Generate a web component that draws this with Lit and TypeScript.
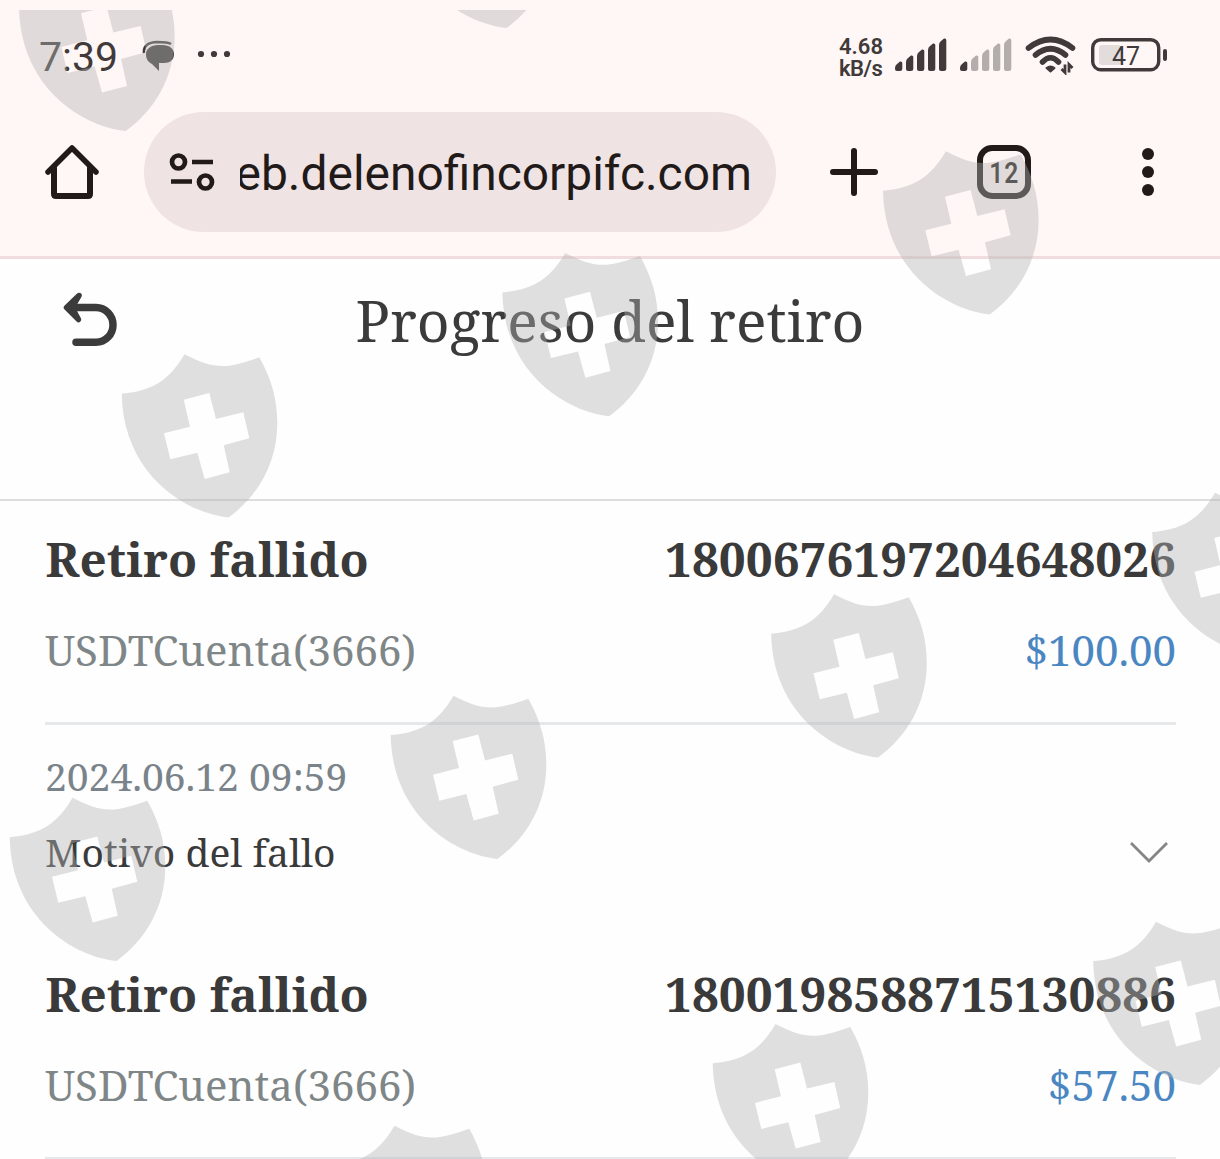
import { LitElement, html, css, svg } from 'lit';
import { customElement, property } from 'lit/decorators.js';

interface Withdrawal {
  status: string;
  id: string;
  account: string;
  amount: string;
  date?: string;
}

const WITHDRAWALS: Withdrawal[] = [
  {
    status: 'Retiro fallido',
    id: '1800676197204648026',
    account: 'USDTCuenta(3666)',
    amount: '$100.00',
    date: '2024.06.12 09:59',
  },
  {
    status: 'Retiro fallido',
    id: '1800198588715130886',
    account: 'USDTCuenta(3666)',
    amount: '$57.50',
  },
];

// Top left corner of each shield
const SHIELDS = [
  [18.3, -32.4],
  [399, -135.5],
  [882.3, 151],
  [501.7, 252.7],
  [121, 354],
  [1151.5, 492.4],
  [770.5, 594],
  [390, 695.4],
  [9, 797.5],
  [1092.5, 921.4],
  [712, 1023.6],
  [331, 1125.5],
];

@customElement('status-bar')
class StatusBar extends LitElement {
  static styles = css`
    :host {
      display: flex;
      justify-content: space-between;
      height: 104px;
      padding: 0 52px 0 39px;
      box-sizing: border-box;
      font-family: Roboto, sans-serif;
      color: #403a3a;
    }
    .left,
    .right {
      display: flex;
      align-items: center;
      height: 110px;
    }
    .time {
      font-size: 41px;
      font-weight: 450;
      width: 103px;
      padding-top: 4px;
    }
    .speed {
      font-size: 22px;
      font-weight: 600;
      line-height: 22px;
      width: 56px;
      padding-top: 6px;
    }
    .unit {
      letter-spacing: -0.5px;
    }
    svg {
      display: block;
    }
    .notifications {
      margin-top: 4px;
    }
    .signal {
      margin-right: 13px;
    }
    .wifi {
      margin-right: 14px;
    }
    .battery-text {
      font-size: 25px;
    }
  `;

  renderSignal(active: number) {
    const tops = [23, 17, 11, 5, 0];
    return html`
      <svg class="signal" width="52" height="34" viewBox="0 0 52 34">
        ${tops.map((top, i) => svg`
          <path
            d="M${i * 11} ${top + 7} Q${i * 11} ${top + 4.5} ${i * 11 + 2} ${top + 3} L${i * 11 + 5} ${top + 0.5} Q${i * 11 + 7.3} ${top} ${i * 11 + 7.3} ${top + 2} V31 Q${i * 11 + 7.3} 33 ${i * 11 + 5} 33 H${i * 11 + 2} Q${i * 11} 33 ${i * 11} 31Z"
            fill="${i < active ? '#403a3a' : '#b3adac'}"
          />`)}
      </svg>
    `;
  }

  render() {
    return html`
      <div class="left">
        <span class="time">7:39</span>
        <svg class="notifications" width="92" height="34" viewBox="0 0 92 34">
          <path d="M2 13 C1 5 7 2.500 15 2 C22 2 26 2 29 4" fill="none" stroke="#403a3a" stroke-width="2.500" />
          <path d="M16 5 H20 C28 5 32 9 32 14 C32 20 28 23 22 23 H17 V31 L10 24 C6 22 4 19 4 14 C4 9 9 5 16 5Z" fill="#403a3a" />
          <circle cx="59" cy="14" r="3.1" fill="#403a3a" />
          <circle cx="72" cy="14" r="3.1" fill="#403a3a" />
          <circle cx="85" cy="14" r="3.1" fill="#403a3a" />
        </svg>
      </div>
      <div class="right">
        <div class="speed">4.68<br /><span class="unit">kB/s</span></div>
        ${this.renderSignal(5)} ${this.renderSignal(1)}
        <svg class="wifi" width="52" height="40" viewBox="0 0 52 40" fill="none" stroke="#403a3a" stroke-width="5.600" stroke-linecap="round">
          <path d="M3.500 13 Q25.500 -4 47.500 13" />
          <path d="M10.500 20 Q25.500 7.500 40.500 20" />
          <path d="M17.500 27 Q25.500 18.500 33.500 27" />
          <path d="M21.500 33 Q25.500 30 29.500 33 L25.500 36.500Z" fill="#403a3a" stroke-width="2" stroke-linejoin="round" />
          <path d="M40 29.500 V37.500 L36.500 34 M44 37.500 V29.500 L47.500 33" stroke-width="2.800" stroke-linecap="butt" />
        </svg>
        <svg width="77" height="34" viewBox="0 0 77 34">
          <rect x="8" y="7" width="22" height="20" rx="3" fill="#e2dcda" />
          <rect x="1.700" y="1.700" width="66" height="30" rx="8" fill="none" stroke="#403a3a" stroke-width="3.400" />
          <rect x="72" y="11" width="4" height="12" rx="2" fill="#403a3a" />
          <text class="battery-text" x="35" y="27" text-anchor="middle" fill="#403a3a">47</text>
        </svg>
      </div>
    `;
  }
}

@customElement('browser-bar')
class BrowserBar extends LitElement {
  static styles = css`
    :host {
      display: flex;
      align-items: center;
      height: 155px;
      padding: 16px 64px 32px 45px;
      box-sizing: border-box;
      border-bottom: 3px solid #f1dce1;
      font-family: Roboto, sans-serif;
      color: #211a19;
    }
    svg {
      display: block;
      flex: none;
    }
    .address {
      display: flex;
      align-items: center;
      width: 632px;
      height: 120px;
      margin: 0 54px 0 45px;
      padding-left: 25px;
      box-sizing: border-box;
      border-radius: 60px;
      background: #efe3e3;
    }
    .host {
      display: flex;
      justify-content: flex-end;
      width: 512px;
      margin-left: 25px;
      overflow: hidden;
      white-space: nowrap;
      font-size: 47.9px;
      line-height: 64px;
      padding-top: 3px;
    }
    .tabs {
      display: flex;
      align-items: center;
      justify-content: center;
      width: 54px;
      height: 54px;
      margin: 0 111px 0 99px;
      box-sizing: border-box;
      border: 6px solid #211a19;
      border-radius: 15px;
      font-size: 30px;
      font-weight: 600;
    }
    .count {
      transform: scaleX(0.82);
      letter-spacing: 1px;
      padding-top: 1px;
    }
  `;

  render() {
    return html`
      <svg width="54" height="56" viewBox="0 0 54 56" fill="none" stroke="#211a19" stroke-width="6" stroke-linejoin="round" stroke-linecap="round">
        <path d="M3 28 L27 4 L51 28" stroke-width="5.500" />
        <path d="M9 24 V50 Q9 52 11 52 H43 Q45 52 45 50 V24" />
      </svg>
      <div class="address">
        <svg width="46" height="38" viewBox="0 0 46 38" fill="none" stroke="#211a19">
          <circle cx="9.500" cy="9" r="6.500" stroke-width="4.700" />
          <circle cx="36.500" cy="29" r="6.500" stroke-width="4.700" />
          <path d="M23 9 H44 M2 28.500 H23" stroke-width="4.400" />
        </svg>
        <div class="host">eb.delenofincorpifc.com</div>
      </div>
      <svg width="48" height="48" viewBox="0 0 48 48" fill="none" stroke="#211a19" stroke-width="6" stroke-linecap="round">
        <path d="M24 3 V45 M3 24 H45" />
      </svg>
      <div class="tabs"><span class="count">12</span></div>
      <svg width="12" height="48" viewBox="0 0 12 48" fill="#211a19">
        <circle cx="6" cy="6" r="6" />
        <circle cx="6" cy="24" r="6" />
        <circle cx="6" cy="42" r="6" />
      </svg>
    `;
  }
}

@customElement('withdrawal-item')
class WithdrawalItem extends LitElement {
  @property({ attribute: false }) item!: Withdrawal;

  static styles = css`
    :host {
      display: block;
      height: 435px;
      padding: 0 44px 0 45px;
      box-sizing: border-box;
    }
    .summary {
      height: 224px;
      padding-top: 26px;
      box-sizing: border-box;
      border-bottom: 3px solid #e6e8e9;
    }
    .row {
      display: flex;
      justify-content: space-between;
      white-space: nowrap;
    }
    .title {
      font-size: 47.6px;
      font-weight: 700;
      line-height: 64px;
      color: #3a3a3a;
    }
    .status {
      letter-spacing: 0.1px;
      padding-left: 0.5px;
    }
    .sub {
      margin-top: 27px;
      font-size: 42px;
      line-height: 64px;
      color: #7f8687;
    }
    .amount {
      color: #4a86c2;
    }
    .date {
      padding-top: 20px;
      font-size: 39px;
      line-height: 62px;
      color: #7a838a;
    }
    .reason {
      align-items: center;
      margin-top: 14px;
      padding-right: 7px;
      font-size: 39px;
      line-height: 62px;
      color: #3a3a3a;
    }
  `;

  render() {
    const { status, id, account, amount, date } = this.item;
    return html`
      <div class="summary">
        <div class="row title">
          <span class="status">${status}</span>
          <span>${id}</span>
        </div>
        <div class="row sub">
          <span>${account}</span>
          <span class="amount">${amount}</span>
        </div>
      </div>
      ${date
        ? html`
            <div class="date">${date}</div>
            <div class="row reason">
              <span>Motivo del fallo</span>
              <svg width="40" height="24" viewBox="0 0 40 24" fill="none" stroke="#858585" stroke-width="2.800">
                <path d="M2 3 L20 21 L38 3" />
              </svg>
            </div>
          `
        : ''}
    `;
  }
}

@customElement('app-root')
class AppRoot extends LitElement {
  static styles = css`
    :host {
      display: block;
      position: relative;
      width: 1220px;
      height: 1159px;
      overflow: hidden;
      background: #fefefe;
      font-family: 'Noto Serif', 'DejaVu Serif Condensed', 'DejaVu Serif', serif;
    }
    .chrome {
      background: #fff7f5;
    }
    .header {
      display: grid;
      grid-template-columns: 1fr auto 1fr;
      align-items: start;
      height: 242px;
      padding: 23px 62px 0;
      box-sizing: border-box;
      border-bottom: 2px solid #dedede;
    }
    .back {
      margin-top: 9px;
    }
    h1 {
      margin: 0;
      font-size: 57px;
      font-weight: 400;
      line-height: 76px;
      color: #3b3b3b;
      white-space: nowrap;
    }
    /* Shields cover the whole page */
    .shields {
      position: absolute;
      top: 0;
      left: 0;
      pointer-events: none;
    }
  `;

  render() {
    return html`
      <div class="chrome">
        <status-bar></status-bar>
        <browser-bar></browser-bar>
      </div>
      <div class="header">
        <svg class="back" width="56" height="57" viewBox="0 0 56 57" fill="none" stroke="#3b3b3b" stroke-width="7.500">
          <path d="M8 16.500 H34 A17 17.400 0 0 1 34 51.300 H14" stroke-linecap="round" />
          <path d="M17 4.500 L4.500 16.500 L16.500 28.500 L10 16.500Z" fill="#3b3b3b" stroke-linejoin="round" stroke-width="5.500" />
        </svg>
        <h1>Progreso del retiro</h1>
      </div>
      ${WITHDRAWALS.map((item) => html`<withdrawal-item .item=${item}></withdrawal-item>`)}
      ${this.renderShields()}
    `;
  }

  renderShields() {
    return html`
      <svg class="shields" width="1220" height="1159" viewBox="0 0 1220 1159">
        <clipPath id="area"><rect y="10" width="1220" height="1149" /></clipPath>
        <g clip-path="url(#area)" fill="#b3b3b3" fill-opacity="0.41" fill-rule="evenodd">
          ${SHIELDS.map(([x, y]) => svg`
            <path
              transform="translate(${x} ${y})"
              d="M63.500 0.300 C94 16 105 15 138.300 3.300 C150 24 156.300 45 156.300 69 C156.300 110 136 143 107.500 163.500 C64 159 2 120 0.700 39.700 C33 37 49 25 63.500 0.300Z
                M62.700 45.700 L88.300 39 L95 65 L122.300 58.300 L128.300 84.300 L102.700 91.300 L108.700 118.300 L83.700 125 L76.300 98.700 L49.300 105.300 L43 79.300 L69 72.700Z"
            />`)}
        </g>
      </svg>
    `;
  }
}
